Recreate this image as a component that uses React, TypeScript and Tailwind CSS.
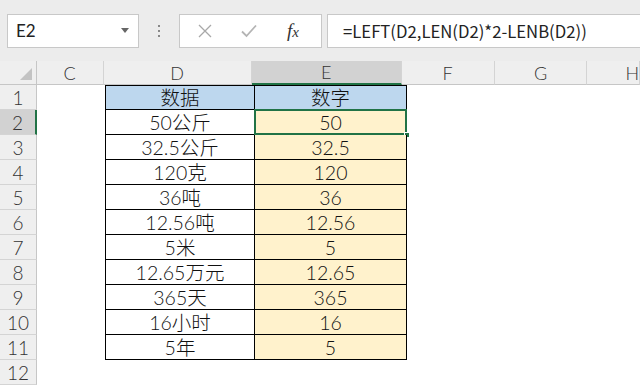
import React from "react";

const rows = [
  { d: "数据", e: "数字" },
  { d: "50公斤", e: "50" },
  { d: "32.5公斤", e: "32.5" },
  { d: "120克", e: "120" },
  { d: "36吨", e: "36" },
  { d: "12.56吨", e: "12.56" },
  { d: "5米", e: "5" },
  { d: "12.65万元", e: "12.65" },
  { d: "365天", e: "365" },
  { d: "16小时", e: "16" },
  { d: "5年", e: "5" },
];

const font = { fontFamily: 'Lato, "Noto Sans CJK SC", sans-serif' };

const ColHead = ({ label, w, selected }: { label: string; w: string; selected?: boolean }) => (
  <div
    className={`${w} h-full flex items-center justify-center border-r border-[#d4d4d4] text-[18px] leading-[22px] font-light text-[#333] ${
      selected ? "bg-[#d2d2d2] border-b-2 border-b-[#217346]" : "border-b border-b-[#c6c6c6]"
    }`}
  >
    {label}
  </div>
);

export default function App() {
  return (
    <div className="w-[640px] h-[389px] overflow-hidden bg-white" style={font}>
      {/* formula bar */}
      <div className="h-[61px] bg-[#ececec] flex items-center">
        <div className="ml-[7px] w-[132px] h-[34px] bg-white border border-[#c8c8c8] flex items-center justify-between pl-[8px] pr-[9px]">
          <span className="text-[17px] leading-[22px] text-[#222]">E2</span>
          <span className="w-0 h-0 border-l-[4px] border-r-[4px] border-t-[5px] border-l-transparent border-r-transparent border-t-[#666]" />
        </div>
        <div className="w-[40px] flex flex-col items-center gap-[3px]">
          <span className="w-[2px] h-[2px] bg-[#888]" />
          <span className="w-[2px] h-[2px] bg-[#888]" />
          <span className="w-[2px] h-[2px] bg-[#888]" />
        </div>
        <div className="w-[143px] h-[34px] bg-white border border-[#c8c8c8] flex items-center">
          <svg className="ml-[18px]" width="14" height="14" viewBox="0 0 14 14">
            <path d="M1 1L13 13M13 1L1 13" stroke="#a8a8a8" strokeWidth="1.3" fill="none" />
          </svg>
          <svg className="ml-[29px]" width="16" height="14" viewBox="0 0 16 14">
            <path d="M1 7.5L5.5 12L15 1.5" stroke="#b4b4b4" strokeWidth="1.8" fill="none" />
          </svg>
          <span
            className="ml-[30px] text-[19px] italic text-[#333] leading-none"
            style={{ fontFamily: '"Liberation Serif", serif' }}
          >
            f<span className="text-[15px]">x</span>
          </span>
        </div>
        <div className="ml-[5px] flex-1 h-[34px] bg-white border border-[#c8c8c8] border-r-0 flex items-center pl-[15px]">
          <span
            className="text-[16.7px] leading-[22px] text-[#222]"
            style={{ fontFamily: '"Noto Sans CJK SC", sans-serif' }}
          >
            =LEFT(D2,LEN(D2)*2-LENB(D2))
          </span>
        </div>
      </div>

      {/* column headers */}
      <div className="h-[24px] flex bg-[#efefef]">
        <div className="w-[37px] h-full border-r border-b border-[#c6c6c6] relative">
          <svg className="absolute right-[4px] bottom-[4px]" width="12" height="12" viewBox="0 0 12 12">
            <path d="M12 0V12H0Z" fill="#c3c3c3" />
          </svg>
        </div>
        <ColHead label="C" w="w-[68px]" />
        <ColHead label="D" w="w-[150px]" />
        <ColHead label="E" w="w-[152px]" selected />
        <ColHead label="F" w="w-[94px]" />
        <ColHead label="G" w="w-[94px]" />
        <ColHead label="H" w="flex-1 justify-start pl-[38px]" />
      </div>

      {/* rows */}
      {[...rows, null].map((r, i) => {
        const sel = i === 1;
        return (
          <div key={i} className="h-[25px] flex">
            <div
              className={`w-[37px] h-full flex items-center justify-center text-[19px] leading-[23px] font-light text-[#333] border-b border-[#d4d4d4] ${
                sel ? "bg-[#d2d2d2] border-r-2 border-r-[#217346]" : "bg-[#efefef] border-r border-r-[#c6c6c6]"
              }`}
            >
              {i + 1}
            </div>
            <div className="w-[68px]" />
            {r ? (
              <>
                <div
                  className={`w-[150px] h-full flex items-center justify-center text-[19.5px] leading-[23px] font-light text-[#111] border-l border-r border-b border-black ${
                    i === 0 ? "border-t bg-[#bdd7ee]" : "bg-white"
                  }`}
                >
                  {r.d}
                </div>
                <div
                  className={`relative w-[152px] h-full flex items-center justify-center text-[19.5px] leading-[23px] font-light text-[#111] border-r border-b border-black ${
                    i === 0 ? "border-t bg-[#bdd7ee]" : "bg-[#fff2cc]"
                  }`}
                >
                  {r.e}
                  {sel && (
                    <>
                      <div className="absolute -left-[1px] -top-[1px] -right-[1px] -bottom-[1px] border-2 border-[#217346]" />
                      <div className="absolute -right-[4px] -bottom-[4px] w-[6px] h-[6px] bg-[#217346] border border-white" />
                    </>
                  )}
                </div>
              </>
            ) : null}
          </div>
        );
      })}
    </div>
  );
}
